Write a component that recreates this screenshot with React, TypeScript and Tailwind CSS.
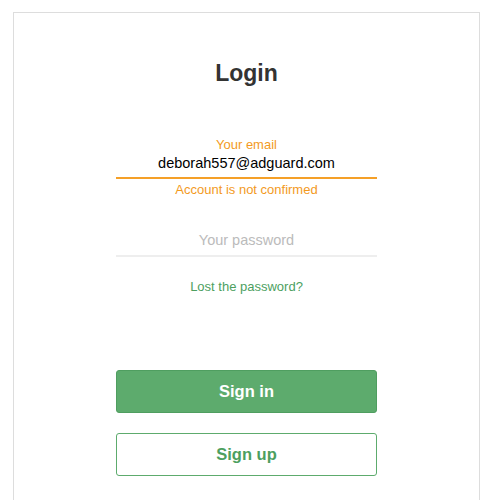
export default function App() {
  return (
    <div className="h-[500px] overflow-hidden bg-white pt-[12px] font-['Liberation_Sans',Arial,sans-serif]">
      <div className="ml-[13px] h-[520px] w-[467px] border border-[#dddddd] bg-white pt-[46px]">
        <h1 className="text-center text-[23px] font-bold leading-[28px] text-[#333333]">Login</h1>
        <form className="mx-auto mt-[50px] flex w-[261px] flex-col">
          <div className="pb-[4px] text-center">
            <div className="text-[13px] leading-[16px] text-[#f39a1e]">Your email</div>
            <div className="text-[14.5px] leading-[20px] text-black">deborah557@adguard.com</div>
          </div>
          <div className="h-[2px] bg-[#f5a028]" />
          <div className="mt-[3px] text-center text-[13px] leading-[16px] text-[#f39a1e]">
            Account is not confirmed
          </div>
          <div className="mt-[32px] pb-[5px] text-center text-[14.5px] leading-[20px] text-[#bbbbbb]">
            Your password
          </div>
          <div className="h-[2px] bg-[#eeeeee]" />
          <a className="mt-[22px] text-center text-[13px] leading-[16px] text-[#4d9f5f]">Lost the password?</a>
          <button
            type="button"
            className="mt-[75px] h-[43px] rounded-[3px] border border-[#4f9e60] bg-[#5dab6d] text-[16.5px] font-bold text-white"
          >
            Sign in
          </button>
          <button
            type="button"
            className="mt-[20px] h-[43px] rounded-[3px] border border-[#5dab6d] bg-white text-[16.5px] font-bold text-[#4d9f5f]"
          >
            Sign up
          </button>
        </form>
      </div>
    </div>
  )
}
